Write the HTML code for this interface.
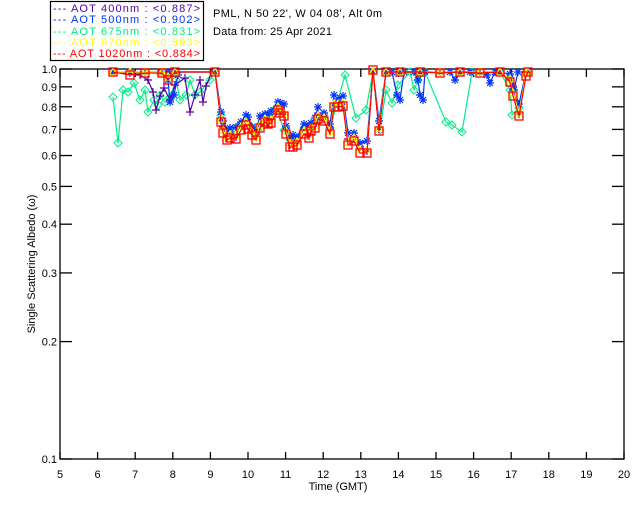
<!DOCTYPE html>
<html><head><meta charset="utf-8"><style>
body{margin:0;background:#fff;}
svg{display:block;font-family:"Liberation Sans",sans-serif;}
</style></head><body>
<svg id="s" width="640" height="512" xmlns="http://www.w3.org/2000/svg" xml:space="preserve">
<rect width="640" height="512" fill="#fff"/>
<rect x="50.5" y="1.5" width="153" height="59" fill="#fff" stroke="#000" stroke-width="1.2"/>
<g font-size="11" style="white-space:pre">
<text x="53" y="12" fill="#5500aa" textLength="147" lengthAdjust="spacing">---  AOT   400nm : &lt;0.887&gt;</text>
<text x="53" y="23" fill="#0033ff" textLength="147" lengthAdjust="spacing">---  AOT   500nm : &lt;0.902&gt;</text>
<text x="53" y="35" fill="#00ee88" textLength="147" lengthAdjust="spacing">---  AOT   675nm : &lt;0.831&gt;</text>
<text x="53" y="46" fill="#ffff00" textLength="147" lengthAdjust="spacing">---  AOT   870nm : &lt;0.893&gt;</text>
<text x="53" y="57" fill="#ff0000" textLength="147" lengthAdjust="spacing">---  AOT  1020nm : &lt;0.884&gt;</text>
<text x="213" y="17" fill="#000" textLength="169" lengthAdjust="spacing">PML, N 50 22', W 04 08', Alt 0m</text>
<text x="213" y="35" fill="#000" textLength="119" lengthAdjust="spacing">Data from: 25 Apr 2021</text>
</g>
<g id="ax" stroke="#000" stroke-width="1.3" fill="none"><rect x="60" y="69" width="564" height="390"/></g>
<g id="lab" font-size="11" fill="#000"></g>
<text x="338" y="490" font-size="11" text-anchor="middle">Time (GMT)</text>
<text transform="translate(35,264) rotate(-90)" font-size="11" text-anchor="middle">Single Scattering Albedo (ω)</text>
<g id="d"></g>
</svg>
<script>
var ns="http://www.w3.org/2000/svg",ax=document.getElementById('ax'),lab=document.getElementById('lab'),d=document.getElementById('d');
function el(p,t,a){var e=document.createElementNS(ns,t);for(var k in a)e.setAttribute(k,a[k]);p.appendChild(e);return e;}
function X(h){return 60+(h-5)*37.6;}
function Y(v){return 69-Math.log10(v)*390;}
for(var h=5;h<=20;h++){var x=X(h);el(ax,'line',{x1:x,y1:459,x2:x,y2:452});el(ax,'line',{x1:x,y1:69,x2:x,y2:77});var t=el(lab,'text',{x:x,y:478,'text-anchor':'middle'});t.textContent=h;}
[1,.9,.8,.7,.6,.5,.4,.3,.2,.1].forEach(function(v){var y=Y(v);el(ax,'line',{x1:60,y1:y,x2:72,y2:y});el(ax,'line',{x1:624,y1:y,x2:612,y2:y});var t=el(lab,'text',{x:57,y:y+4,'text-anchor':'end'});t.textContent=v==1?'1.0':String(v);});
var red=[[113,72],[130,75],[145,73],[162,73],[168,80],[175,72],[215,72],[221,122],[223,133],[227,140],[230,138],[236,139],[241,130],[246,125],[248,129],[252,135],[256,140],[260,128],[265,122],[268,124],[271,123],[278,110],[280,113],[284,116],[286,134],[290,147],[293,147],[297,145],[304,134],[309,138],[311,131],[315,128],[318,119],[324,121],[330,134],[334,107],[338,107],[343,106],[348,145],[354,141],[360,153],[367,153],[373,70],[379,131],[386,72],[400,72],[420,72],[440,73],[460,72],[480,73],[500,72],[510,82],[513,96],[519,116],[526,76],[528,72]];
function off(a,dy,f){return a.map(function(p,i){if(p[1]<=73)return [p[0],72];return [p[0],Math.max(72,p[1]-dy-(f?f(i):0))];});}
var yel=off(red,3),blu=off(red,8,function(i){return (i%3)*2;}),pur=off(red,6,function(i){return (i%2)*-4;});
var grn=[[113,97],[118,143],[123,90],[128,92],[134,83],[140,100],[145,90],[148,112],[154,100],[158,105],[160,95],[165,102],[170,97],[176,80],[180,100],[186,95],[190,80],[195,95],[200,92],[210,80],[215,72],[221,115],[226,130],[232,130],[240,125],[246,120],[252,128],[258,130],[264,125],[270,120],[276,108],[284,130],[290,140],[296,140],[304,128],[310,130],[318,118],[324,115],[330,128],[345,75],[356,118],[366,110],[373,72],[380,130],[386,90],[392,103],[398,85],[410,72],[414,90],[418,80],[425,72],[446,122],[452,125],[462,132],[472,72],[500,72],[510,90],[512,115],[519,108],[526,72]];
var pur2=[[115,72],[140,75],[148,80],[153,92],[156,110],[160,96],[164,88],[170,100],[175,85],[185,78],[190,112],[195,95],[200,80],[203,102],[206,86],[212,72]];
var blu2=[[160,72],[168,80],[170,102],[174,95],[178,75]];
var blu3=[[386,72],[392,72],[397,95],[400,100],[404,72],[414,72],[418,80],[420,95],[423,100],[425,72],[450,72],[455,80],[460,72],[470,72],[487,75],[490,83],[495,72],[510,78],[514,90],[518,72]];
function draw(pts,col,mk){var s=pts.map(function(p){return p.join(',');}).join(' ');el(d,'polyline',{points:s,fill:'none',stroke:col,'stroke-width':1.2});
pts.forEach(function(p){var x=p[0],y=p[1];if(mk=='sq')el(d,'rect',{x:x-4,y:y-4,width:8,height:8,fill:'none',stroke:col,'stroke-width':1.3});
else if(mk=='tri')el(d,'polygon',{points:(x-4)+','+(y+3)+' '+(x+4)+','+(y+3)+' '+x+','+(y-4),fill:'none',stroke:col,'stroke-width':1.3});
else if(mk=='di')el(d,'polygon',{points:x+','+(y-4)+' '+(x+4)+','+y+' '+x+','+(y+4)+' '+(x-4)+','+y,fill:'none',stroke:col,'stroke-width':1});
else if(mk=='st'){el(d,'path',{d:'M'+(x-4)+' '+y+'h8M'+x+' '+(y-4)+'v8M'+(x-3)+' '+(y-3)+'l6 6M'+(x+3)+' '+(y-3)+'l-6 6',stroke:col,'stroke-width':1.2});}
else el(d,'path',{d:'M'+(x-4)+' '+y+'h8M'+x+' '+(y-4)+'v8',stroke:col,'stroke-width':1.2});});}
draw(grn,'#00ee88','di');draw(pur2,'#5500aa','pl');draw(pur,'#5500aa','pl');draw(blu2,'#0033ff','st');draw(blu3,'#0033ff','st');draw(blu,'#0033ff','st');draw(yel,'#ffff00','tri');draw(red,'#ff0000','sq');
</script>
</body></html>
